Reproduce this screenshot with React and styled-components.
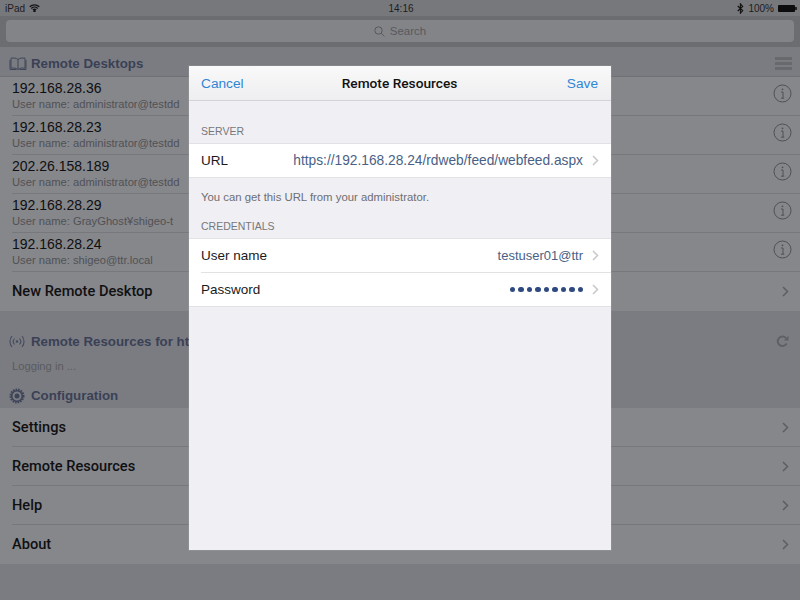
import React from 'react';
import styled, { createGlobalStyle } from 'styled-components';

const Global = createGlobalStyle`
  html, body { margin: 0; padding: 0; }
  body { font-family: "Liberation Sans", Arial, sans-serif; background: #7b7c81; -webkit-font-smoothing: antialiased; }
`;

const Screen = styled.div`
  position: relative;
  width: 800px;
  height: 600px;
  overflow: hidden;
  background: #7b7c81;
  display: flex;
  flex-direction: column;
`;

const StatusBar = styled.div`
  height: 16px;
  background: #77787c;
  display: grid;
  grid-template-columns: 1fr auto 1fr;
  align-items: center;
  padding: 0 3px 0 5px;
  font-size: 10px;
  color: #1d1d20;
`;

const StatusSide = styled.div`
  display: flex;
  align-items: center;
  gap: 4px;
  justify-content: ${p => (p.$right ? 'flex-end' : 'flex-start')};
`;

const Battery = styled.div`
  width: 17px;
  height: 7px;
  background: #0c0c0e;
  border-radius: 1px;
  margin-right: 2px;
  position: relative;
  &::after {
    content: '';
    position: absolute;
    right: -2px;
    top: 2px;
    width: 2px;
    height: 3px;
    background: #222;
  }
`;

const SearchBar = styled.div`
  height: 31px;
  background: #6c6d71;
  padding: 4px 6px 5px;
  box-sizing: border-box;
`;

const SearchField = styled.div`
  height: 22px;
  background: #838488;
  border-radius: 4px;
  display: flex;
  align-items: center;
  justify-content: center;
  gap: 5px;
  font-size: 11.5px;
  color: #58595d;
`;

const SectionHead = styled.div`
  height: ${p => p.$h}px;
  box-sizing: border-box;
  display: flex;
  align-items: center;
  padding: ${p => p.$pad || '4px 8px 0 9px'};
  gap: ${p => p.$gap || 4}px;
  color: #3a4156;
  font-size: 13.3px;
  font-weight: 700;
  white-space: nowrap;
  border-bottom: ${p => (p.$line ? '1px solid #707175' : 'none')};
`;

const Grow = styled.div`
  flex: 1;
`;

const List = styled.div`
  background: #86878b;
`;

const RowBox = styled.div`
  height: 39px;
  box-sizing: border-box;
  padding-left: 12px;
`;

const RowInner = styled.div`
  height: 100%;
  box-sizing: border-box;
  display: flex;
  align-items: center;
  justify-content: space-between;
  padding-right: ${p => p.$right}px;
  border-bottom: 1px solid ${p => (p.$last ? 'transparent' : '#77787c')};
`;

const InfoSlot = styled.div`
  display: flex;
  margin-bottom: 5px;
`;

const HostText = styled.div`
  display: flex;
  flex-direction: column;
  gap: 2px;
  margin-bottom: 2px;
`;

const Host = styled.div`
  font-size: 14px;
  line-height: 16px;
  color: #0f0f11;
`;

const UserLine = styled.div`
  font-size: 11.2px;
  line-height: 13px;
  color: #505155;
`;

const RowTitle = styled.div`
  font-family: Roboto, "Liberation Sans", sans-serif;
  font-size: 14.6px;
  font-weight: 500;
  color: #101012;
`;

const ResourceNote = styled.div`
  height: 27px;
  padding: 0 12px;
  font-size: 11.2px;
  line-height: 20px;
  color: #5a5b5f;
`;

const Modal = styled.div`
  position: absolute;
  left: 189px;
  top: 66px;
  width: 422px;
  height: 484px;
  background: #efeff4;
  box-shadow: 0 0 0 1px rgba(255, 255, 255, 0.08);
  display: flex;
  flex-direction: column;
`;

const ModalHeader = styled.div`
  height: 35px;
  box-sizing: border-box;
  background: linear-gradient(#f9f9fa, #eeeef0);
  border-bottom: 1px solid #d4d4d7;
  display: grid;
  grid-template-columns: 1fr auto 1fr;
  align-items: center;
  padding: 0 13px 0 12px;
  font-size: 13.7px;
`;

const NavButton = styled.div`
  color: #2f86d6;
  text-align: ${p => (p.$right ? 'right' : 'left')};
`;

const ModalTitle = styled.div`
  font-family: Roboto, "Liberation Sans", sans-serif;
  font-weight: 500;
  font-size: 13.7px;
  color: #111;
`;

const GroupLabel = styled.div`
  height: ${p => p.$h}px;
  box-sizing: border-box;
  padding: 0 12px 6px;
  display: flex;
  align-items: flex-end;
  font-size: 10.5px;
  color: #77777c;
`;

const Group = styled.div`
  background: #fff;
  border-top: 1px solid #e2e2e5;
  border-bottom: 1px solid #e2e2e5;
`;

const Field = styled.div`
  height: 33px;
  margin-left: 12px;
  padding-right: 12px;
  display: flex;
  align-items: center;
  justify-content: space-between;
  font-size: 13.5px;
  color: #1a1a1c;
  border-bottom: ${p => (p.$line ? '1px solid #e2e2e5' : 'none')};
`;

const FieldValue = styled.div`
  display: flex;
  align-items: center;
  gap: 9px;
  color: #4a5f85;
  font-size: ${p => p.$size || 13.75}px;
`;

const Hint = styled.div`
  height: 39px;
  box-sizing: border-box;
  padding: 13px 12px 0;
  font-size: 11.35px;
  color: #6e6e73;
`;

const Dots = styled.div`
  display: flex;
  gap: 3px;
`;

const Dot = styled.span`
  width: 5.5px;
  height: 5.5px;
  border-radius: 50%;
  background: #2f4a80;
`;

const Chevron = ({ color = '#c7c7cc' }) => (
  <svg width="7" height="11" viewBox="0 0 7 11" fill="none">
    <path d="M1 1l4.500 4.500L1 10" stroke={color} strokeWidth="1.500" />
  </svg>
);

const InfoIcon = () => (
  <svg width="19" height="19" viewBox="0 0 19 19" fill="none" stroke="#4f5054">
    <circle cx="9.500" cy="9.500" r="8.500" strokeWidth="1" />
    <circle cx="9.500" cy="5.300" r="0.900" fill="#4f5054" stroke="none" />
    <path d="M8 8h2v6M8 14.200h3.200" strokeWidth="1" />
  </svg>
);

const WifiIcon = () => (
  <svg width="11" height="8" viewBox="0 0 11 8" fill="none" stroke="#141416" strokeWidth="1.300">
    <path d="M.7 2.800a7 7 0 0 1 9.600 0M2.300 4.400a4.700 4.700 0 0 1 6.400 0M3.900 6a2.300 2.300 0 0 1 3.200 0" />
    <circle cx="5.500" cy="7.200" r=".6" fill="#141416" />
  </svg>
);

const BluetoothIcon = () => (
  <svg width="7" height="11" viewBox="0 0 7 11" fill="none" stroke="#111" strokeWidth="1.100">
    <path d="M.7 3l5 4.600-2.300 2.600V.8l2.300 2.600L.7 8" />
  </svg>
);

const SearchIcon = () => (
  <svg width="11" height="11" viewBox="0 0 11 11" fill="none" stroke="#58595d" strokeWidth="1">
    <circle cx="4.500" cy="4.500" r="3.700" />
    <path d="M7.200 7.200l3.200 3.200" />
  </svg>
);

const BookIcon = () => (
  <svg width="18" height="14" viewBox="0 0 18 14" fill="none" stroke="#3f4658" strokeWidth="1">
    <path d="M9 2.500C7.500 1 4.500.8 2 1.200v10c2.500-.4 5.500-.2 7 1.300 1.500-1.500 4.500-1.700 7-1.300v-10C13.500.8 10.500 1 9 2.500zM9 2.500v10M1 3v9.500h6.500M17 3v9.500h-6.500" />
  </svg>
);

const MenuIcon = () => (
  <svg width="17" height="13" viewBox="0 0 17 13" fill="#68696d">
    <rect y="0" width="17" height="3" />
    <rect y="5" width="17" height="3" />
    <rect y="10" width="17" height="3" />
  </svg>
);

const AntennaIcon = () => (
  <svg width="16" height="13" viewBox="0 0 16 13" fill="none" stroke="#444b5e" strokeWidth="1.100">
    <circle cx="8" cy="6.500" r="1.300" fill="#444b5e" stroke="none" />
    <path d="M5.500 3.500a4.500 4.500 0 0 0 0 6M10.500 3.500a4.500 4.500 0 0 1 0 6M3 1a8.500 8.500 0 0 0 0 11M13 1a8.500 8.500 0 0 1 0 11" />
  </svg>
);

const GearIcon = () => (
  <svg width="16" height="16" viewBox="0 0 16 16">
    <circle cx="8" cy="8" r="6.300" fill="none" stroke="#3d4458" strokeWidth="2.400" strokeDasharray="1.500 1" />
    <circle cx="8" cy="8" r="5.300" fill="none" stroke="#3d4458" strokeWidth="1.600" />
    <circle cx="8" cy="8" r="2.500" fill="#3d4458" />
  </svg>
);

const RefreshIcon = () => (
  <svg width="13" height="13" viewBox="0 0 13 13" fill="none" stroke="#5f6064" strokeWidth="2">
    <path d="M10.600 8.500A4.700 4.700 0 1 1 10 3.200" />
    <path d="M12.500 .8v4.700H7.800z" fill="#5f6064" stroke="none" />
  </svg>
);

const hosts = [
  { host: '192.168.28.36', user: 'administrator@testdd' },
  { host: '192.168.28.23', user: 'administrator@testdd' },
  { host: '202.26.158.189', user: 'administrator@testdd' },
  { host: '192.168.28.29', user: 'GrayGhost¥shigeo-t' },
  { host: '192.168.28.24', user: 'shigeo@ttr.local' },
];

const configRows = ['Settings', 'Remote Resources', 'Help', 'About'];

const App = () => (
  <Screen>
    <Global />
    <StatusBar>
      <StatusSide>iPad <WifiIcon /></StatusSide>
      <div>14:16</div>
      <StatusSide $right><BluetoothIcon /> 100% <Battery /></StatusSide>
    </StatusBar>
    <SearchBar>
      <SearchField><SearchIcon /> Search</SearchField>
    </SearchBar>

    <SectionHead $h={30} $line>
      <BookIcon /> Remote Desktops <Grow /> <MenuIcon />
    </SectionHead>
    <List>
      {hosts.map(h => (
        <RowBox key={h.host}>
          <RowInner $right={8}>
            <HostText>
              <Host>{h.host}</Host>
              <UserLine>User name: {h.user}</UserLine>
            </HostText>
            <InfoSlot><InfoIcon /></InfoSlot>
          </RowInner>
        </RowBox>
      ))}
      <RowBox>
        <RowInner $last $right={11}>
          <RowTitle>New Remote Desktop</RowTitle>
          <Chevron color="#5d5e62" />
        </RowInner>
      </RowBox>
    </List>

    <SectionHead $h={45} $gap={6} $pad="15px 11px 0 9px">
      <AntennaIcon /> Remote Resources for https://192.168.28.24 <Grow /> <RefreshIcon />
    </SectionHead>
    <ResourceNote>Logging in ...</ResourceNote>
    <SectionHead $h={25} $gap={6} $pad="0 12px 0 9px">
      <GearIcon /> Configuration
    </SectionHead>
    <List>
      {configRows.map((t, i) => (
        <RowBox key={t}>
          <RowInner $right={11} $last={i === configRows.length - 1}>
            <RowTitle>{t}</RowTitle>
            <Chevron color="#5d5e62" />
          </RowInner>
        </RowBox>
      ))}
    </List>

    <Modal>
      <ModalHeader>
        <NavButton>Cancel</NavButton>
        <ModalTitle>Remote Resources</ModalTitle>
        <NavButton $right>Save</NavButton>
      </ModalHeader>
      <GroupLabel $h={42}>SERVER</GroupLabel>
      <Group>
        <Field>
          URL
          <FieldValue>https://192.168.28.24/rdweb/feed/webfeed.aspx <Chevron /></FieldValue>
        </Field>
      </Group>
      <Hint>You can get this URL from your administrator.</Hint>
      <GroupLabel $h={21}>CREDENTIALS</GroupLabel>
      <Group>
        <Field $line>
          User name
          <FieldValue $size={13}>testuser01@ttr <Chevron /></FieldValue>
        </Field>
        <Field>
          Password
          <FieldValue>
            <Dots>{Array.from({ length: 9 }, (_, i) => <Dot key={i} />)}</Dots>
            <Chevron />
          </FieldValue>
        </Field>
      </Group>
    </Modal>
  </Screen>
);

export default App;
